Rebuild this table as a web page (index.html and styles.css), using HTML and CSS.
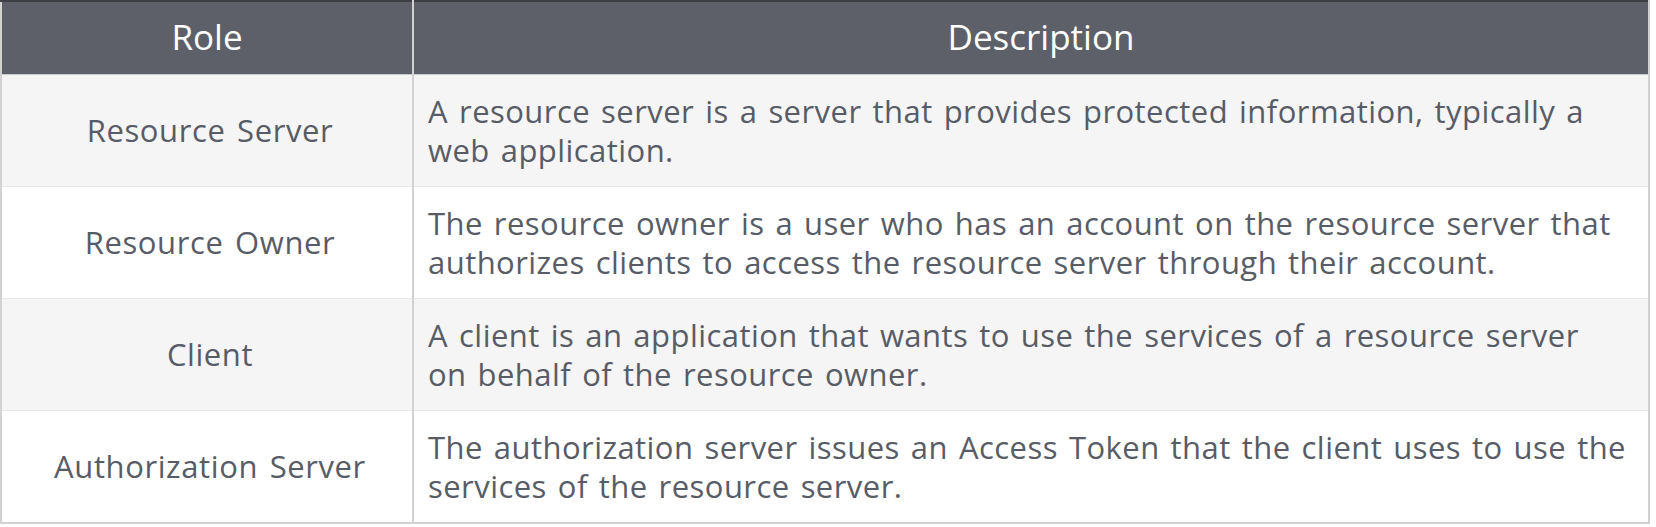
FILE: index.html
```html
<!DOCTYPE html>
<html>
<head>
<meta charset="utf-8">
<link rel="stylesheet" href="styles.css">
</head>
<body>
<table class="roles">
  <colgroup>
    <col class="col-role">
    <col class="col-desc">
  </colgroup>
  <thead>
    <tr>
      <th>Role</th>
      <th>Description</th>
    </tr>
  </thead>
  <tbody>
    <tr class="odd">
      <td class="role">Resource Server</td>
      <td class="desc">A resource server is a server that provides protected information, typically a web application.</td>
    </tr>
    <tr>
      <td class="role">Resource Owner</td>
      <td class="desc">The resource owner is a user who has an account on the resource server that authorizes clients to access the resource server through their account.</td>
    </tr>
    <tr class="odd">
      <td class="role">Client</td>
      <td class="desc">A client is an application that wants to use the services of a resource server<br>on behalf of the resource owner.</td>
    </tr>
    <tr>
      <td class="role">Authorization Server</td>
      <td class="desc">The authorization server issues an Access Token that the client uses to use the services of the resource server.</td>
    </tr>
  </tbody>
</table>
</body>
</html>
```
FILE: styles.css
```css
html, body {
  margin: 0;
  padding: 0;
  background: #ffffff;
}

.roles {
  border-collapse: collapse;
  width: 1650px;
  table-layout: fixed;
  font-family: "Open Sans", "Noto Sans", sans-serif;
  color: #585c66;
}

.col-role { width: 412px; }

.roles th {
  background: #5d6069;
  color: #ffffff;
  font-weight: 400;
  font-size: 35px;
  height: 69px;
  padding: 0 0 3px;
  border-top: 2px solid #3d3f45;
  border-bottom: 1px solid #c9cacc;
  border-left: 2px solid #d2d2d2;
  border-right: 2px solid #d2d2d2;
  text-align: center;
}

.roles th + th { padding-left: 20px; }

.roles td {
  height: 111px;
  padding: 0 8px 0 14px;
  font-size: 31px;
  line-height: 39px;
  letter-spacing: 0.45px;
  word-spacing: 2.5px;
  border-left: 2px solid #d2d2d2;
  border-right: 2px solid #d2d2d2;
  border-bottom: 1px solid #e8e8e8;
  vertical-align: middle;
  background: #ffffff;
}

.roles tr.odd td { background: #f5f5f5; }

.roles tbody tr:last-child td { border-bottom: 2px solid #d2d2d2; }

.roles td.role { text-align: center; letter-spacing: 0.6px; word-spacing: 3px; }
.roles td.desc { text-align: left; }
```
